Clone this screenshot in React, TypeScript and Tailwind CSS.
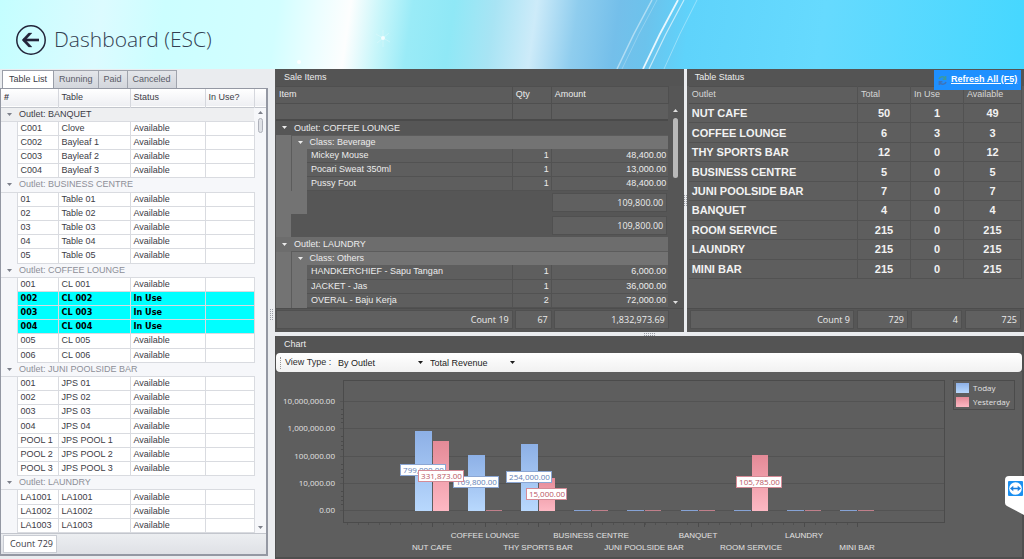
import type { ReactNode } from "react";

const ARIAL = "font-['Liberation_Sans',sans-serif]";
const SEGOE = "font-['Open_Sans','Noto_Sans',sans-serif]";

type TableRow = { id: string; name: string; inUse?: boolean };

const tableGroups: { outlet: string; rows: TableRow[] }[] = [
  {
    outlet: "BANQUET",
    rows: [
      { id: "C001", name: "Clove" },
      { id: "C002", name: "Bayleaf 1" },
      { id: "C003", name: "Bayleaf 2" },
      { id: "C004", name: "Bayleaf 3" },
    ],
  },
  {
    outlet: "BUSINESS CENTRE",
    rows: [
      { id: "01", name: "Table 01" },
      { id: "02", name: "Table 02" },
      { id: "03", name: "Table 03" },
      { id: "04", name: "Table 04" },
      { id: "05", name: "Table 05" },
    ],
  },
  {
    outlet: "COFFEE LOUNGE",
    rows: [
      { id: "001", name: "CL 001" },
      { id: "002", name: "CL 002", inUse: true },
      { id: "003", name: "CL 003", inUse: true },
      { id: "004", name: "CL 004", inUse: true },
      { id: "005", name: "CL 005" },
      { id: "006", name: "CL 006" },
    ],
  },
  {
    outlet: "JUNI POOLSIDE BAR",
    rows: [
      { id: "001", name: "JPS 01" },
      { id: "002", name: "JPS 02" },
      { id: "003", name: "JPS 03" },
      { id: "004", name: "JPS 04" },
      { id: "POOL 1", name: "JPS POOL 1" },
      { id: "POOL 2", name: "JPS POOL 2" },
      { id: "POOL 3", name: "JPS POOL 3" },
    ],
  },
  {
    outlet: "LAUNDRY",
    rows: [
      { id: "LA1001", name: "LA1001" },
      { id: "LA1002", name: "LA1002" },
      { id: "LA1003", name: "LA1003" },
    ],
  },
];

const outletStatus = [
  ["NUT CAFE", 50, 1, 49],
  ["COFFEE LOUNGE", 6, 3, 3],
  ["THY SPORTS BAR", 12, 0, 12],
  ["BUSINESS CENTRE", 5, 0, 5],
  ["JUNI POOLSIDE BAR", 7, 0, 7],
  ["BANQUET", 4, 0, 4],
  ["ROOM SERVICE", 215, 0, 215],
  ["LAUNDRY", 215, 0, 215],
  ["MINI BAR", 215, 0, 215],
];

// today / yesterday are the bar heights in px on the log scale
const chartData = [
  { name: "NUT CAFE", today: 80, yesterday: 70 },
  { name: "COFFEE LOUNGE", today: 56, yesterday: 1 },
  { name: "THY SPORTS BAR", today: 67, yesterday: 33 },
  { name: "BUSINESS CENTRE", today: 1, yesterday: 1 },
  { name: "JUNI POOLSIDE BAR", today: 1, yesterday: 1 },
  { name: "BANQUET", today: 1, yesterday: 1 },
  { name: "ROOM SERVICE", today: 1, yesterday: 56 },
  { name: "LAUNDRY", today: 1, yesterday: 1 },
  { name: "MINI BAR", today: 1, yesterday: 1 },
];

const chartLabels = [
  { x: 125, y: 91, w: 45, text: "799,000.00", red: false },
  { x: 178, y: 103, w: 45, text: "109,800.00", red: false },
  { x: 143, y: 97, w: 45, text: "331,873.00", red: true },
  { x: 231, y: 98, w: 45, text: "254,000.00", red: false },
  { x: 251, y: 115, w: 40, text: "15,000.00", red: true },
  { x: 461, y: 103, w: 45, text: "105,785.00", red: true },
];

function Caret({ up = false, className = "" }: { up?: boolean; className?: string }) {
  return (
    <svg viewBox="0 0 5 3" className={`h-[3px] w-[5px] shrink-0 ${className}`} fill="currentColor">
      <path d={up ? "M0 3L2.5 0L5 3Z" : "M0 0L2.5 3L5 0Z"} />
    </svg>
  );
}

function Header() {
  return (
    <header className="relative flex h-[69px] shrink-0 items-center overflow-hidden bg-[linear-gradient(98deg,#c4feff_0%,#dcfbff_10%,#ccfeff_16%,#d2feff_27%,#ecfeff_31%,#fdfefe_34%,#c8f6fa_37%,#9aebf7_40%,#8fe8f6_44%,#a8e4f4_48%,#cdebf9_52%,#8fcdee_56%,#74bfea_60%,#6cc3ec_63%,#5fd3fb_67%,#66dafe_80%,#45d7ff_100%)] pl-4">
      <svg viewBox="0 0 1024 69" preserveAspectRatio="none" className="absolute inset-0 h-full w-full" fill="none" stroke="#fff">
        <path d="M652 0Q633 34 617 69" strokeWidth="1.5" opacity=".45" />
        <path d="M657 0Q638 34 622 69" strokeWidth="1" opacity=".25" />
        <path d="M678 0Q659 34 643 69" strokeWidth="1.8" opacity=".85" />
        <path d="M684 0Q665 34 649 69" strokeWidth="1.2" opacity=".6" />
        <path d="M697 0Q679 34 664 69" strokeWidth="1" opacity=".35" />
        <circle cx="383" cy="38" r="2" fill="#fff" stroke="none" opacity=".8" />
        <path d="M376 34L390 42M377 43L389 33M383 30V47" strokeWidth=".7" opacity=".35" />
        <circle cx="299" cy="62" r="2" fill="#fff" stroke="none" opacity=".9" />
      </svg>
      <button aria-label="Back" className="relative mt-[10px]">
        <svg viewBox="0 0 30 30" className="h-[30px] w-[30px]" fill="none" stroke="#23243a">
          <circle cx="15" cy="15" r="14.2" strokeWidth="1.5" />
          <path d="M7 15H23" strokeWidth="2.6" />
          <path d="M16 8H12.6L6 15L12.6 22H16L9.6 15Z" fill="#23243a" strokeWidth=".3" />
        </svg>
      </button>
      <h1 className={`relative ml-2 mt-2 text-[21px] leading-[30px] font-light text-[#333f52] ${SEGOE}`}>
        Dashboard (ESC)
      </h1>
    </header>
  );
}

function TableList() {
  const tabs = ["Running", "Paid", "Canceled"];
  return (
    <section className="flex w-[268px] shrink-0 flex-col pb-[3px] text-[#3c3c46]">
      <div role="tablist" className="flex h-[19px] shrink-0 items-stretch pl-[2px] pt-px">
        <button role="tab" aria-selected="true" className="border border-b-0 border-[#9a9ea8] bg-white px-[6px]">
          Table List
        </button>
        {tabs.map((t) => (
          <button key={t} role="tab" aria-selected="false" className="border border-b-0 border-l-0 border-[#a0a4ad] bg-linear-to-b from-[#e4e6ea] to-[#d3d6dc] px-[5px] text-[#5a5c68]">
            {t}
          </button>
        ))}
      </div>
      <div className="flex min-h-0 flex-1 flex-col border border-r-2 border-b-2 border-[#9498a3] bg-[#f6f7fa]">
        <div className="relative flex min-h-0 flex-1">
          <table className="h-full w-full table-fixed border-collapse">
            <colgroup>
              <col className="w-[16px]" />
              <col className="w-[41px]" />
              <col className="w-[72px]" />
              <col className="w-[75px]" />
              <col />
              <col className="w-[12px]" />
            </colgroup>
            <thead>
              <tr className="h-[18px] border-b border-[#c3c6cd] bg-linear-to-b from-white to-[#eeeff3] text-left">
                <th colSpan={2} className="border-r border-[#d5d7dd] pl-[3px] font-bold">#</th>
                <th className="border-r border-[#d5d7dd] pl-[3px] font-normal">Table</th>
                <th className="border-r border-[#d5d7dd] pl-[3px] font-normal">Status</th>
                <th className="border-r border-[#d5d7dd] pl-[3px] font-normal">In Use?</th>
                <th />
              </tr>
            </thead>
            {tableGroups.map((g, i) => (
              <tbody key={g.outlet}>
                <tr className={i === 0 ? "bg-[#eeeff1]" : "text-[#8d8f98]"}>
                  <td colSpan={5} className="border-b border-[#d9dbe0] p-0">
                    <div className="flex items-center gap-[7px] pl-[6px] leading-[13px]">
                      <Caret className="text-[#7d808a]" />
                      Outlet: {g.outlet}
                    </div>
                  </td>
                  <td className="bg-[#f6f7fa]" />
                </tr>
                {g.rows.map((r) => (
                  <tr
                    key={r.id}
                    className={r.inUse ? "font-bold text-black font-['DejaVu_Sans_Condensed','DejaVu_Sans',sans-serif]" : ""}
                  >
                    <td className="border-r border-[#d9dbe0]" />
                    {[r.id, r.name, r.inUse ? "In Use" : "Available", ""].map((c, k) => (
                      <td
                        key={k}
                        className={`border-r border-b border-[#d9dbe0] p-0 pl-[3px] leading-[13px] whitespace-nowrap ${r.inUse ? "bg-[#00ffff]" : "bg-white"}`}
                      >
                        {c}
                      </td>
                    ))}
                    <td />
                  </tr>
                ))}
              </tbody>
            ))}
          </table>
          <div className="absolute top-[18px] right-0 bottom-0 flex w-[11px] flex-col items-center justify-between py-1 text-[#7d808a]">
            <div className="flex flex-col items-center gap-1">
              <Caret up />
              <div className="h-[15px] w-[5px] rounded-sm border border-[#aeb1ba] bg-[#dfe1e6]" />
            </div>
            <Caret />
          </div>
        </div>
        <div className="h-[21px] shrink-0 border-t border-[#c3c6cd] bg-linear-to-b from-[#eceef1] to-[#dfe1e6] pt-px pl-[2px]">
          <div className={`w-[54px] border border-[#c9ccd3] bg-white pr-[3px] text-right leading-[16px] ${SEGOE}`}>Count 729</div>
        </div>
      </div>
    </section>
  );
}

function PanelTitle({ children }: { children: ReactNode }) {
  return <h2 className="h-[17px] shrink-0 bg-[#545454] pl-2 leading-[17px]">{children}</h2>;
}

const cell = "border border-[#505050] bg-[#606060]";

function GroupTotal({ depth }: { depth: number }) {
  return (
    <tr className="h-[23px]">
      <td className="bg-[#737373]" />
      {depth === 2 && <td className="bg-[#737373]" />}
      <td colSpan={depth === 2 ? 2 : 3} className="bg-[#565656]" />
      <td className={`bg-[#565656] p-px ${SEGOE}`}>
        <div className="border border-[#505050] bg-[#606060] pr-[3px] text-right leading-[17px]">109,800.00</div>
      </td>
    </tr>
  );
}

function SaleGroup({ outlet, cls, items, plain }: { outlet: string; cls: string; items: string[][]; plain?: boolean }) {
  return (
    <>
      <tr className={plain ? "bg-[#565656]" : "bg-[#6d6d6d]"}>
        <td colSpan={5} className="p-0">
          <div className="flex items-center gap-[7px] pl-[6px] leading-[14px]">
            <Caret />
            Outlet: {outlet}
          </div>
        </td>
      </tr>
      <tr className="bg-[#737373]">
        <td className="border-r border-[#5c5c5c]" />
        <td colSpan={4} className="border-t border-[#5c5c5c] p-0">
          <div className="flex items-center gap-[7px] pl-[6px] leading-[13px]">
            <Caret />
            Class: {cls}
          </div>
        </td>
      </tr>
      {items.map(([name, qty, amount]) => (
        <tr key={name}>
          <td className="border-r border-[#5c5c5c] bg-[#737373]" />
          <td className="bg-[#737373]" />
          <td className="border-r border-b border-[#525252] bg-[#5e5e5e] p-0 pl-1 leading-[13px]">{name}</td>
          <td className="border-r border-b border-[#525252] bg-[#5e5e5e] p-0 pr-[2px] text-right leading-[13px]">{qty}</td>
          <td className="border-b border-[#525252] bg-[#5e5e5e] p-0 pr-[2px] text-right leading-[13px]">{amount}</td>
        </tr>
      ))}
    </>
  );
}

function SaleItems() {
  return (
    <section className="flex min-w-0 flex-[410] flex-col bg-[#565656] px-px">
      <PanelTitle>Sale Items</PanelTitle>
      <div className="relative flex min-h-0 flex-1 pr-[14px]">
        <table className="h-full w-full table-fixed border-collapse">
          <colgroup>
            <col className="w-[15px]" />
            <col className="w-[16px]" />
            <col />
            <col className="w-[39px]" />
            <col className="w-[117px]" />
          </colgroup>
          <thead className="text-left">
            <tr className="h-[17px] border-y border-[#4f4f4f] bg-[#5c5c5c]">
              <th colSpan={3} className="border-r border-[#4f4f4f] pl-[3px] font-normal">Item</th>
              <th className="border-r border-[#4f4f4f] pl-[3px] font-normal">Qty</th>
              <th className="border-r border-[#4f4f4f] pl-[3px] font-normal">Amount</th>
            </tr>
            <tr className="h-[16px] border-b-2 border-[#4a4a4a] bg-[#5e5e5e]">
              <td colSpan={3} className="border-r border-[#4f4f4f]" />
              <td className="border-r border-[#4f4f4f]" />
              <td />
            </tr>
          </thead>
          <tbody>
            <SaleGroup
              outlet="COFFEE LOUNGE"
              cls="Beverage"
              plain
              items={[
                ["Mickey Mouse", "1", "48,400.00"],
                ["Pocari Sweat 350ml", "1", "13,000.00"],
                ["Pussy Foot", "1", "48,400.00"],
              ]}
            />
            <GroupTotal depth={2} />
            <GroupTotal depth={1} />
            <SaleGroup
              outlet="LAUNDRY"
              cls="Others"
              items={[
                ["HANDKERCHIEF - Sapu Tangan", "1", "6,000.00"],
                ["JACKET - Jas", "1", "36,000.00"],
                ["OVERAL - Baju Kerja", "2", "72,000.00"],
              ]}
            />
          </tbody>
        </table>
        <div className="absolute top-[23px] right-[2px] bottom-1 flex w-[11px] flex-col items-center justify-between text-[#e0e0e0]">
          <div className="flex flex-col items-center gap-[6px]">
            <Caret up />
            <div className="h-[60px] w-[5px] rounded-sm bg-[#b9b9b9]" />
          </div>
          <Caret />
        </div>
      </div>
      <div className={`flex shrink-0 gap-[2px] border-t border-[#4d4d4d] pt-px pr-[14px] pb-[3px] text-right leading-[17px] ${SEGOE}`}>
        <div className={`flex-1 pr-[3px] ${cell}`}>Count 19</div>
        <div className={`w-[37px] pr-[3px] ${cell}`}>67</div>
        <div className={`w-[115px] pr-[3px] ${cell}`}>1,832,973.69</div>
      </div>
    </section>
  );
}

function TableStatus() {
  return (
    <section className="relative flex min-w-0 flex-[336] flex-col bg-[#5e5e5e] px-[2px]">
      <div className="-mx-[2px]">
        <PanelTitle>Table Status</PanelTitle>
      </div>
      <button className="absolute top-px right-[3px] flex h-5 w-[87px] items-center gap-1 bg-[#1e90ff] pl-1 font-bold whitespace-nowrap text-white">
        <svg viewBox="0 0 9 11" className="h-[11px] w-[9px] shrink-0" fill="none" strokeWidth="1.6">
          <path d="M1 4C2 1 6 1 7 3.5M7.6 1V4.2H4.6" stroke="#3c9a9e" />
          <path d="M8 7C7 10 3 10 2 7.5M1.4 10V6.8H4.4" stroke="#3f74b8" />
        </svg>
        <span className="underline">Refresh All (F5)</span>
      </button>
      <table className="h-[193px] w-full table-fixed border-collapse">
        <colgroup>
          <col />
          <col className="w-[53px]" />
          <col className="w-[53px]" />
          <col className="w-[58px]" />
        </colgroup>
        <thead>
          <tr className="h-[17px] border-y border-[#4f4f4f] text-left text-[#d6d6d6]">
            {["Outlet", "Total", "In Use", "Available"].map((h) => (
              <th key={h} className="border-r border-[#525252] pl-[3px] font-normal">{h}</th>
            ))}
          </tr>
        </thead>
        <tbody className="text-center text-[11px] leading-[18px] font-bold text-[#f2f2f2]">
          {outletStatus.map(([name, ...nums]) => (
            <tr key={name} className="border-b border-[#525252]">
              <td className="border-r border-[#525252] p-0 pl-[3px] text-left">{name}</td>
              {nums.map((n, k) => (
                <td key={k} className="border-r border-[#525252] p-0">{n}</td>
              ))}
            </tr>
          ))}
        </tbody>
      </table>
      <div className={`-mx-[2px] mt-auto flex shrink-0 gap-[3px] border-t border-[#4d4d4d] bg-[#565656] px-[3px] pt-px pb-[3px] text-right leading-[17px] ${SEGOE}`}>
        <div className={`flex-1 pr-[3px] ${cell}`}>Count 9</div>
        <div className={`w-[51px] pr-[3px] ${cell}`}>729</div>
        <div className={`w-[51px] pr-[3px] ${cell}`}>4</div>
        <div className={`w-[56px] pr-[3px] ${cell}`}>725</div>
      </div>
    </section>
  );
}

function Picker({ id, label, value }: { id: string; label: string; value: string }) {
  return (
    <div className="relative flex w-[92px] items-center text-[#1c1c1c]">
      <select id={id} aria-label={label} className="w-full appearance-none bg-transparent px-1 leading-[16px]">
        <option>{value}</option>
      </select>
      <Caret className="pointer-events-none absolute right-[3px]" />
    </div>
  );
}

function Chart() {
  const base = 138;
  const center = (i: number) => 156 + Math.round(i * 53.1);
  const minor = Array.from({ length: 49 }, (_, i) => 71 + Math.round(i * 10.63));
  return (
    <section className="flex shrink-0 flex-col bg-[#4f4f4f] pr-[2px] pb-[2px] pl-px">
      <PanelTitle>Chart</PanelTitle>
      <div className="flex h-[19px] shrink-0 items-center rounded-sm bg-linear-to-b from-white to-[#f1f1f1] pl-1 text-[#2d2d2d]">
        <span className="mr-1 h-3 border-l border-dotted border-[#999]" />
        <label htmlFor="view-type" className="w-[49px] whitespace-nowrap">View Type :</label>
        <Picker id="view-type" label="View Type" value="By Outlet" />
        <Picker id="measure" label="Measure" value="Total Revenue" />
      </div>
      <svg viewBox="0 -1 746 185" className="w-full bg-[#5e5e5e]" shapeRendering="crispEdges">
        <defs>
          <linearGradient id="blue" x1="0" y1="0" x2="0" y2="1">
            <stop offset="0" stopColor="#8db0e6" />
            <stop offset="1" stopColor="#b8d8fd" />
          </linearGradient>
          <linearGradient id="red" x1="0" y1="0" x2="0" y2="1">
            <stop offset="0" stopColor="#e48a97" />
            <stop offset="1" stopColor="#fdb8c3" />
          </linearGradient>
        </defs>
        <g fill="none" stroke="#4b4b4b">
          {[28, 55, 83, 110, 137].map((y) => (
            <path key={y} d={`M64 ${y}.5H668`} stroke="#535353" />
          ))}
          <rect x="67.5" y="7.5" width="601" height="142" />
          {minor.map((x) => (
            <path key={x} d={`M${x}.5 150V152`} stroke="#505050" />
          ))}
          {[36, 63, 91, 118].map((y) => [0, 5, 9, 13].map((d) => <path key={y + d} d={`M65 ${y + d}.5H67`} />))}
          {chartData.map((d, i) => (
            <path key={d.name} d={`M${center(i)}.5 150V154`} />
          ))}
        </g>
        {chartData.map((d, i) => (
          <g key={d.name}>
            <rect x={center(i) - 17} y={base - d.today} width="17" height={d.today} fill={d.today > 1 ? "url(#blue)" : "#86a3d6"} />
            <rect x={center(i) + 1} y={base - d.yesterday} width="16" height={d.yesterday} fill={d.yesterday > 1 ? "url(#red)" : "#c07f8a"} />
            <text x={center(i)} y={i % 2 ? 165 : 177} textAnchor="middle" fontSize="8" fill="#e2e2e2">
              {d.name}
            </text>
          </g>
        ))}
        <g className={SEGOE} fontSize="8" fill="#e2e2e2">
          {["10,000,000.00", "1,000,000.00", "100,000.00", "10,000.00", "0.00"].map((t, i) => (
            <text key={t} x="59" y={[31, 58, 86, 113, 140][i]} textAnchor="end">
              {t}
            </text>
          ))}
          {chartLabels.map((l) => (
            <g key={l.text}>
              <rect x={l.x - 0.5} y={l.y + 0.5} width={l.w} height="11" fill="#fff" stroke={l.red ? "#d58b96" : "#8ba6d3"} />
              <text x={l.x + l.w / 2} y={l.y + 9} textAnchor="middle" fill={l.red ? "#b85563" : "#5f7fb6"}>
                {l.text}
              </text>
            </g>
          ))}
          <rect x="677.5" y="7.5" width="61" height="29" fill="none" stroke="#4b4b4b" />
          <rect x="680" y="10" width="13" height="10" fill="url(#blue)" />
          <rect x="680" y="24" width="13" height="10" fill="url(#red)" />
          <text x="697" y="18">Today</text>
          <text x="697" y="32">Yesterday</text>
        </g>
      </svg>
    </section>
  );
}

function Grip({ vertical = false }: { vertical?: boolean }) {
  return (
    <span
      className={
        vertical
          ? "h-[11px] w-[3px] border-x border-dotted border-[#9a9da5]"
          : "h-[3px] w-[11px] border-y border-dotted border-[#9a9da5]"
      }
    />
  );
}

export default function App() {
  return (
    <div className={`relative flex h-screen min-h-[540px] flex-col overflow-hidden bg-[#eaecef] text-[9px] ${ARIAL}`}>
      <Header />
      <main className="flex min-h-0 flex-1">
        <TableList />
        <div className="flex w-[7px] shrink-0 items-center justify-center">
          <Grip vertical />
        </div>
        <div className="flex min-w-0 flex-1 flex-col text-[#ececec]">
          <div className="flex min-h-0 flex-1">
            <SaleItems />
            <div className="flex w-[3px] shrink-0 items-center justify-center">
              <Grip vertical />
            </div>
            <TableStatus />
          </div>
          <div className="flex h-1 shrink-0 items-center justify-center">
            <Grip />
          </div>
          <Chart />
        </div>
      </main>
      <button aria-label="TeamViewer" className="absolute right-0 bottom-11 h-[39px] w-[19px]">
        <svg viewBox="0 0 19 39" className="h-full w-full">
          <path d="M19 0H4Q0 0 0 4V27Q0 29 2 30L19 39Z" fill="#fff" />
          <rect x="3" y="5" width="15" height="15" rx="1" fill="#1a8ff0" />
          <circle cx="10.5" cy="12.500" r="6.300" fill="#fff" />
          <path d="M5 12.500L8.300 9.800V11.700H12.700V9.800L16 12.500L12.700 15.200V13.300H8.300V15.200Z" fill="#1a7fe0" />
        </svg>
      </button>
    </div>
  );
}
